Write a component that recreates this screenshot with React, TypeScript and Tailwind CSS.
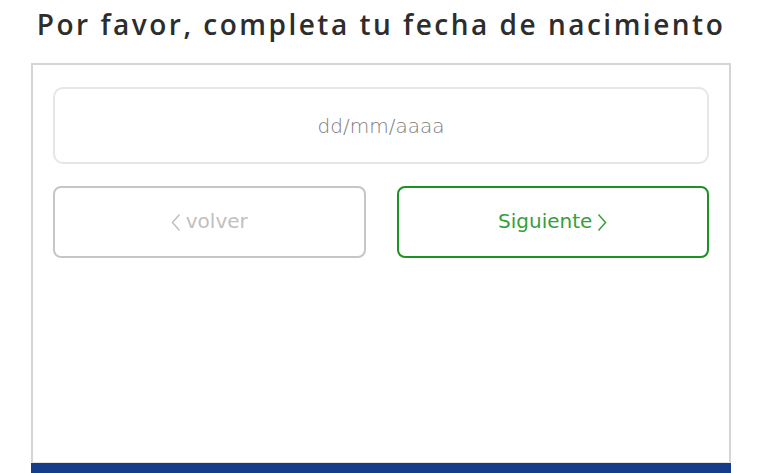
import { useState } from "react";

const font = { fontFamily: '"DejaVu Sans", "Open Sans", sans-serif' };
const titleFont = { fontFamily: '"Open Sans", "DejaVu Sans", sans-serif' };

function ChevronLeft({ className }: { className?: string }) {
  return (
    <svg viewBox="0 0 10 20" className={className} fill="none" stroke="currentColor" strokeWidth="1.5">
      <polyline points="8.5,2 1.5,10 8.5,18" />
    </svg>
  );
}

function ChevronRight({ className }: { className?: string }) {
  return (
    <svg viewBox="0 0 10 20" className={className} fill="none" stroke="currentColor" strokeWidth="1.5">
      <polyline points="1.5,2 8.5,10 1.5,18" />
    </svg>
  );
}

export default function App() {
  const [date, setDate] = useState("");

  return (
    <div className="min-h-screen bg-white" style={font}>
      <div className="ml-[31px] w-[700px]">
        {/* Title */}
        <h1
          className="flex h-[63px] items-start justify-center whitespace-nowrap pt-[3px] text-[28px] font-semibold tracking-[2.5px] text-[#2d2d2d]"
          style={titleFont}
        >
          Por favor, completa tu fecha de nacimiento
        </h1>

        {/* Card */}
        <div className="h-[399px] border-2 border-b-0 border-[#d5d5d5] px-5 pt-[22px]">
          <input
            value={date}
            onChange={(e) => setDate(e.target.value)}
            placeholder="dd/mm/aaaa"
            className="h-[77px] w-full rounded-[10px] border-2 border-[#e6e6e6] text-center text-[20px] font-light text-[#555] outline-none placeholder:text-[#7c7c7c]"
          />

          <div className="mt-[22px] grid grid-cols-2 gap-[31px]">
            <button className="flex h-[72px] items-center justify-center gap-[5px] rounded-[8px] border-2 border-[#c6c6c6] text-[20px] text-[#c0c0c0]">
              <ChevronLeft className="h-[21px] w-[10px]" />
              <span className="-mt-[2px]">volver</span>
            </button>
            <button className="flex h-[72px] items-center justify-center gap-[5px] rounded-[8px] border-2 border-[#1a9322] text-[20px] text-[#35a03a]">
              <span className="-mt-[2px]">Siguiente</span>
              <ChevronRight className="h-[21px] w-[10px]" />
            </button>
          </div>
        </div>

        {/* Footer bar */}
        <div className="h-[11px] border-t border-[#e3e3e3] bg-[#143c8b]" />
      </div>
    </div>
  );
}
